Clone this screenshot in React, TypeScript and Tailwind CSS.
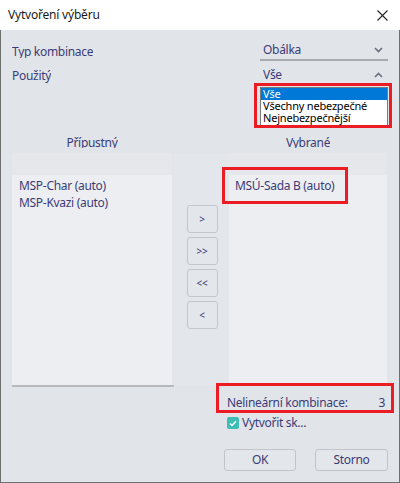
import React from "react";

const txt = "text-[#3c3c78]";

function ChevronDown() {
  return (
    <svg width="9" height="6" viewBox="0 0 9 6">
      <path d="M1 1 L4.5 4.5 L8 1" stroke="#6d6d7d" strokeWidth="1.6" fill="none" />
    </svg>
  );
}
function ChevronUp() {
  return (
    <svg width="9" height="6" viewBox="0 0 9 6">
      <path d="M1 5 L4.5 1.5 L8 5" stroke="#6d6d7d" strokeWidth="1.6" fill="none" />
    </svg>
  );
}

function MoveBtn({ label }: { label: string }) {
  return (
    <div className={`w-[31px] h-[28px] rounded-[3px] border border-[#c3c6cd] bg-[#e3e6ea] flex items-center justify-center text-[10px] ${txt}`}>
      {label}
    </div>
  );
}

export default function App() {
  return (
    <div
      className="w-[400px] h-[483px] flex flex-col overflow-hidden"
      style={{ fontFamily: '"Noto Sans", "Liberation Sans", sans-serif' }}
    >
      {/* title bar */}
      <div className="h-[30px] bg-white flex items-center justify-between pl-[8px] pr-[12px] shrink-0">
        <span className="text-[12px] tracking-[-0.2px] text-[#1a1a1a]">Vytvoření výběru</span>
        <svg width="11" height="11" viewBox="0 0 11 11">
          <path d="M0.5 0.5 L10.5 10.5 M10.5 0.5 L0.5 10.5" stroke="#222" strokeWidth="1.1" />
        </svg>
      </div>

      {/* body */}
      <div className="relative flex-1 bg-[#e1e4e9] border-l border-r border-b border-[#6f6f6f] flex flex-col text-[12px] tracking-[-0.3px]">
        {/* row 1 */}
        <div className="flex items-end justify-between pl-[11px] pr-[11px] mt-[11px] h-[20px]">
          <span className={`inline-block h-[14px] overflow-hidden leading-[16px] mb-[3px] ${txt}`}>Typ kombinace</span>
          <div className="w-[128px] h-[20px] border-b-2 border-[#a9abb2] flex items-center justify-between pl-[3px] pr-[5px]">
            <span className={txt}>Obálka</span>
            <ChevronDown />
          </div>
        </div>
        {/* row 2 */}
        <div className="flex items-center justify-between pl-[11px] pr-[11px] mt-[6px] h-[16px]">
          <span className={`inline-block h-[15px] overflow-hidden leading-[16px] ${txt}`}>Použitý</span>
          <div className="w-[128px] flex items-center justify-between pl-[3px] pr-[5px]">
            <span className={txt}>Vše</span>
            <ChevronUp />
          </div>
        </div>

        {/* column headers */}
        <div className="flex pl-[11px] mt-[52px] h-[14px]">
          <div className="w-[160px] flex justify-center">
            <span className={`inline-block h-[13px] overflow-hidden leading-[16px] ${txt}`}>Přípustný</span>
          </div>
          <div className="w-[57px]" />
          <div className="w-[158px] flex justify-center">
            <span className={`inline-block h-[13px] overflow-hidden leading-[16px] ${txt}`}>Vybrané</span>
          </div>
        </div>

        {/* lists */}
        <div className="flex pl-[11px] mt-[4px] h-[234px]">
          <div className="w-[162px] flex flex-col">
            <div className="flex-1 flex flex-col bg-[#eceef1] w-[160px]">
              <div className="h-[22px] bg-[#e5e7eb]" />
              <div className={`flex flex-col pl-[7px] pt-[2px] leading-[17px] ${txt}`}>
                <span>MSP-Char (auto)</span>
                <span>MSP-Kvazi (auto)</span>
              </div>
            </div>
            <div className="h-[2px] bg-[#b7b8bb]" />
          </div>
          <div className="w-[55px] h-[232px] bg-[#e3e6ea] flex flex-col items-center gap-[4px] pt-[52px] pl-[1px]">
            <MoveBtn label=">" />
            <MoveBtn label=">>" />
            <MoveBtn label="<<" />
            <MoveBtn label="<" />
          </div>
          <div className="w-[158px] h-[230px] flex flex-col bg-[#eceef1]">
            <div className="h-[22px] bg-[#e5e7eb]" />
            <div className={`flex flex-col pl-[6px] pt-[2px] leading-[17px] ${txt}`}>
              <span>MSÚ-Sada B (auto)</span>
            </div>
          </div>
        </div>

        {/* nonlinear row */}
        <div className="flex justify-end pr-[13px] mt-[8px]">
          <div className={`w-[159px] flex justify-between h-[16px] items-center ${txt}`}>
            <span>Nelineární kombinace:</span>
            <span className="pr-[1px]">3</span>
          </div>
        </div>
        {/* checkbox */}
        <div className="flex justify-end pr-[13px] mt-[5px]">
          <div className="w-[159px] flex items-center gap-[3px] h-[14px]">
            <div className="w-[12px] h-[12px] rounded-[2px] bg-[#3dbdb3] flex items-center justify-center">
              <svg width="8" height="7" viewBox="0 0 8 7">
                <path d="M1 3.6 L3 5.5 L7 1.3" stroke="white" strokeWidth="1.4" fill="none" />
              </svg>
            </div>
            <span className={txt}>Vytvořit sk...</span>
          </div>
        </div>

        {/* buttons */}
        <div className="flex justify-end gap-[19px] pr-[11px] mt-[19px]">
          <div className={`w-[72px] h-[22px] rounded-[3px] border border-[#c1c4cb] bg-[#e3e6ea] flex items-center justify-center ${txt}`}>OK</div>
          <div className={`w-[73px] h-[22px] rounded-[3px] border border-[#c1c4cb] bg-[#e3e6ea] flex items-center justify-center ${txt}`}>Storno</div>
        </div>

        {/* dropdown popup */}
        <div className="absolute left-[259px] top-[57px] w-[128px] h-[39px] bg-white border border-[#7a7a7a] flex flex-col text-[11px] leading-[12px] tracking-[-0.2px] text-black">
          <div className="bg-[#0078d7] text-white pl-[2px] h-[12px] leading-[12px]">Vše</div>
          <div className="pl-[2px] h-[12px] leading-[12px]">Všechny nebezpečné</div>
          <div className="pl-[2px] h-[12px] leading-[12px]">Nejnebezpečnější</div>
        </div>

        {/* red annotation boxes */}
        <div className="absolute left-[253px] top-[53px] w-[138px] h-[45px] border-[3px] border-[#ec1c24]" />
        <div className="absolute left-[221px] top-[137px] w-[126px] h-[37px] border-[3px] border-[#ec1c24]" />
        <div className="absolute left-[215px] top-[353px] w-[178px] h-[30px] border-[3px] border-[#ec1c24]" />
      </div>
    </div>
  );
}
